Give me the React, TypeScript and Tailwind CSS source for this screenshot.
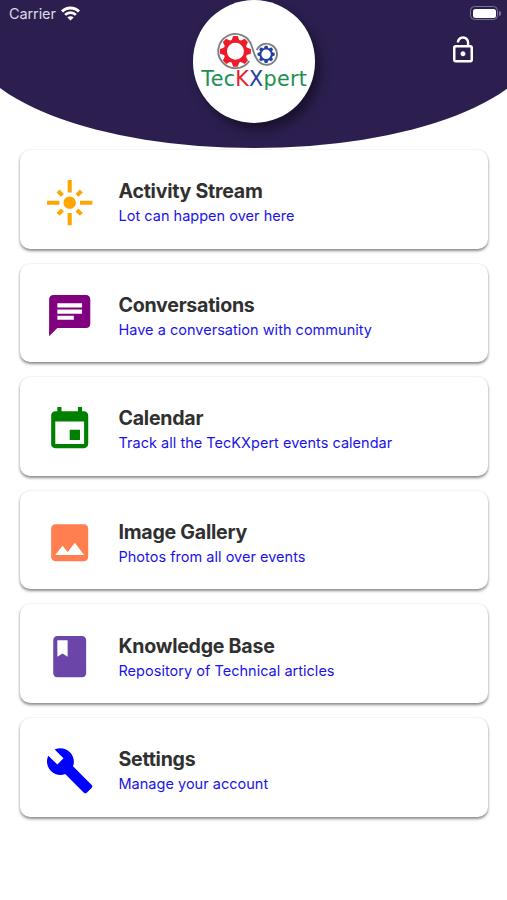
import type { IconType } from 'react-icons'
import { MdBook, MdBuild, MdChat, MdEvent, MdFlare, MdImage, MdLockOpen } from 'react-icons/md'

interface MenuItem {
  title: string
  subtitle: string
  icon: IconType
  iconClass: string
}

const MENU_ITEMS: MenuItem[] = [
  {
    title: 'Activity Stream',
    subtitle: 'Lot can happen over here',
    icon: MdFlare,
    iconClass: 'text-[#ffa500]',
  },
  {
    title: 'Conversations',
    subtitle: 'Have a conversation with community',
    icon: MdChat,
    iconClass: 'text-[#800080]',
  },
  {
    title: 'Calendar',
    subtitle: 'Track all the TecKXpert events calendar',
    icon: MdEvent,
    iconClass: 'text-[#008000]',
  },
  {
    title: 'Image Gallery',
    subtitle: 'Photos from all over events',
    icon: MdImage,
    iconClass: 'text-[#ff7f50]',
  },
  {
    title: 'Knowledge Base',
    subtitle: 'Repository of Technical articles',
    icon: MdBook,
    iconClass: 'text-[#6b46a8]',
  },
  {
    title: 'Settings',
    subtitle: 'Manage your account',
    icon: MdBuild,
    iconClass: 'text-[#0000ff]',
  },
]

const TEETH = [0, 45, 90, 135, 180, 225, 270, 315]

interface GearProps {
  cx: number
  cy: number
  /** Outer radius, teeth included. */
  r: number
  color: string
}

function Gear({ cx, cy, r, color }: GearProps) {
  return (
    <g transform={`translate(${cx} ${cy}) scale(${r / 10})`}>
      <circle r="6.6" fill="none" stroke={color} strokeWidth="2.2" />
      {TEETH.map((angle) => (
        <path
          key={angle}
          d="M-2.6 -6.8L-1.5 -10H1.5L2.6 -6.8Z"
          fill={color}
          transform={`rotate(${angle})`}
        />
      ))}
    </g>
  )
}

function Logo() {
  return (
    <div className="h-[123px] w-[122.5px] rounded-full bg-white shadow-[5px_7px_12px_rgba(0,0,0,0.45)]">
      <svg viewBox="0 0 123 123" className="h-full w-full">
        <path
          d="M56.6 61A17.2 17.2 0 1 1 59.2 46.5C61 52 61.8 58 66.5 62A10.6 10.6 0 1 0 64 50"
          fill="none"
          stroke="#7d7f82"
          strokeWidth="1.9"
        />
        <Gear cx={42.6} cy={51.3} r={15.5} color="#ed1c2b" />
        <Gear cx={73.4} cy={54.3} r={8.6} color="#2340a0" />
        <text
          x="8.3"
          y="86.6"
          fontSize="20.8"
          textLength="106"
          className="font-['DejaVu_Sans',sans-serif]"
          fill="#1c9150"
        >
          Tec<tspan fill="#ed1c2b">K</tspan>
          <tspan fill="#2340a0">X</tspan>pert
        </text>
      </svg>
    </div>
  )
}

function StatusBar() {
  return (
    <div className="flex h-[26px] items-center justify-between pr-[6px] pl-[9px]">
      <div className="flex items-center gap-[5px]">
        <span className="pt-px text-[14.5px] leading-5 tracking-[-0.1px] text-[#dcd9e4]">
          Carrier
        </span>
        <svg viewBox="0 0 19 15" className="h-[15px] w-[19px]" fill="none" stroke="#fff">
          <path d="M1 5.6A12 12 0 0 1 18 5.6" strokeWidth="2.9" />
          <path d="M4.1 8.9A7.6 7.6 0 0 1 14.9 8.9" strokeWidth="2.7" />
          <path d="M9.5 14.6L6.4 11.5A4.3 4.3 0 0 1 12.6 11.5Z" fill="#fff" stroke="none" />
        </svg>
      </div>
      <div className="flex items-center gap-px">
        <div className="h-[14px] w-[28px] rounded-[4.5px] border border-[#7d7596] p-[1.5px]">
          <div className="h-full w-full rounded-[2.5px] bg-white" />
        </div>
        <div className="h-[5px] w-[2px] rounded-r-full bg-[#7d7596]" />
      </div>
    </div>
  )
}

function Header() {
  return (
    <header className="relative h-[148px] overflow-hidden">
      <div className="-mx-[31.5px] h-[147.5px] rounded-b-[285px_110px] bg-[#2c1f50] px-[31.5px]">
        <StatusBar />
        <div className="flex justify-end pt-[9px] pr-[29px]">
          <button type="button" aria-label="Unlock" className="text-white">
            <MdLockOpen className="h-[30px] w-[30px]" />
          </button>
        </div>
      </div>
      <div className="absolute top-0 left-[192.5px]">
        <Logo />
      </div>
    </header>
  )
}

function MenuCard({ title, subtitle, icon: Icon, iconClass }: MenuItem) {
  return (
    <button
      type="button"
      className="flex h-[98.6px] w-full items-center rounded-[10px] bg-white pt-[6px] pl-[24.5px] text-left shadow-[0_2px_3px_rgba(0,0,0,0.45),0_0_2px_rgba(0,0,0,0.1)]"
    >
      <Icon className={`h-[49.4px] w-[49.4px] shrink-0 ${iconClass}`} />
      <span className="flex flex-col pt-px pl-[24.3px]">
        <span className="text-[19.6px] leading-[26px] font-bold tracking-[-0.26px] text-[#303030]">
          {title}
        </span>
        <span className="text-[14.5px] leading-[23px] tracking-[0.02px] text-[#1a14e6]">
          {subtitle}
        </span>
      </span>
    </button>
  )
}

export default function App() {
  return (
    <div className="min-h-[900px] w-[507px] overflow-hidden bg-white font-['Inter',sans-serif]">
      <Header />
      <main className="flex flex-col gap-[15px] pt-[2px] pr-[19.5px] pl-[20.3px]">
        {MENU_ITEMS.map((item) => (
          <MenuCard key={item.title} {...item} />
        ))}
      </main>
    </div>
  )
}
